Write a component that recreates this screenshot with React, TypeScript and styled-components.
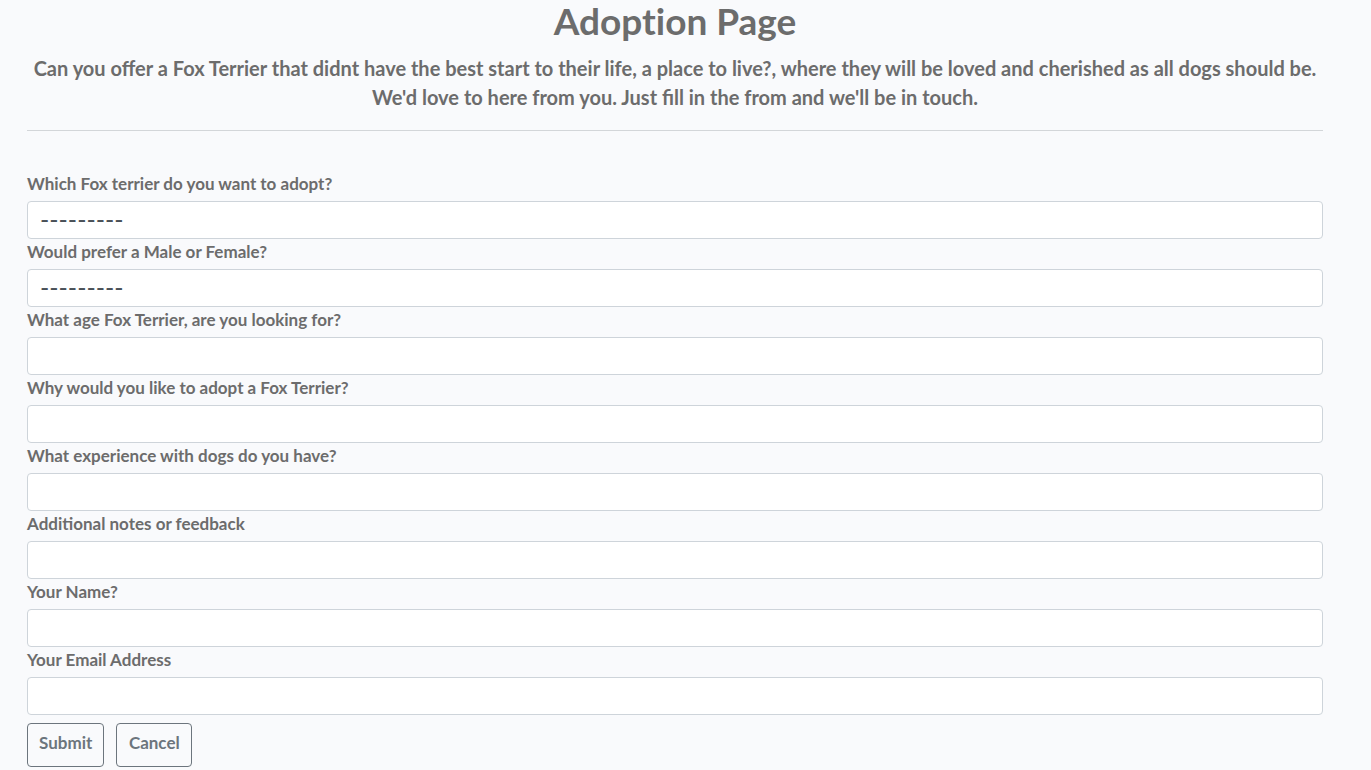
import React from "react";
import styled, { createGlobalStyle } from "styled-components";

const GlobalStyle = createGlobalStyle`
  *, *::before, *::after { box-sizing: border-box; }
  body {
    margin: 0;
    background: #f9fafc;
    color: #6c6c6c;
    font-family: Lato, "Open Sans", sans-serif;
    font-weight: 700;
  }
`;

const Page = styled.main`
  padding: 0 48px 3px 27px;
`;

const Title = styled.h1`
  margin: 0;
  font-size: 37px;
  line-height: 42px;
  font-weight: 700;
  font-variant-ligatures: none;
  text-align: center;
`;

const Intro = styled.p`
  margin: 12px 0 0;
  font-size: 20px;
  line-height: 29px;
  text-align: center;
`;

const Divider = styled.hr`
  margin: 18px 0 40px;
  border: 0;
  border-top: 1px solid #d3d6d9;
`;

const Field = styled.div`
  display: flex;
  flex-direction: column;
`;

const Label = styled.label`
  height: 30px;
  font-size: 17px;
  line-height: 26px;
`;

const Input = styled.input`
  width: 100%;
  height: 38px;
  padding: 6px 12px;
  border: 1px solid #ced4da;
  border-radius: 4px;
  background: #fff;
  color: #495057;
  font: inherit;
  font-size: 17px;
`;

const Select = styled.select`
  appearance: none;
  width: 100%;
  height: 38px;
  padding: 0 12px 2px;
  border: 1px solid #ced4da;
  border-radius: 4px;
  background: #fff;
  color: #495057;
  font: inherit;
  font-size: 25px;
  font-weight: 400;
  line-height: 30px;
`;

const Actions = styled.div`
  display: flex;
  gap: 12px;
  margin-top: 8px;
`;

const Button = styled.button`
  min-width: 76px;
  height: 44px;
  padding: 0 11px 4px;
  border: 1px solid #6c757d;
  border-radius: 4px;
  background: transparent;
  color: #6c757d;
  font: inherit;
  font-size: 17px;
  line-height: 24px;
`;

type Question = { id: string; label: string; kind: "select" | "text" | "email" };

const questions: Question[] = [
  { id: "terrier", label: "Which Fox terrier do you want to adopt?", kind: "select" },
  { id: "gender", label: "Would prefer a Male or Female?", kind: "select" },
  { id: "age", label: "What age Fox Terrier, are you looking for?", kind: "text" },
  { id: "reason", label: "Why would you like to adopt a Fox Terrier?", kind: "text" },
  { id: "experience", label: "What experience with dogs do you have?", kind: "text" },
  { id: "notes", label: "Additional notes or feedback", kind: "text" },
  { id: "name", label: "Your Name?", kind: "text" },
  { id: "email", label: "Your Email Address", kind: "email" },
];

export default function App() {
  return (
    <>
      <GlobalStyle />
      <Page>
        <Title>Adoption Page</Title>
        <Intro>
          Can you offer a Fox Terrier that didnt have the best start to their life, a place to
          live?, where they will be loved and cherished as all dogs should be.
          <br />
          We'd love to here from you. Just fill in the from and we'll be in touch.
        </Intro>
        <Divider />
        <form onSubmit={(event) => event.preventDefault()}>
          {questions.map(({ id, label, kind }) => (
            <Field key={id}>
              <Label htmlFor={id}>{label}</Label>
              {kind === "select" ? (
                <Select id={id} name={id}>
                  <option value="">---------</option>
                </Select>
              ) : (
                <Input id={id} name={id} type={kind} />
              )}
            </Field>
          ))}
          <Actions>
            <Button type="submit">Submit</Button>
            <Button type="button">Cancel</Button>
          </Actions>
        </form>
      </Page>
    </>
  );
}
